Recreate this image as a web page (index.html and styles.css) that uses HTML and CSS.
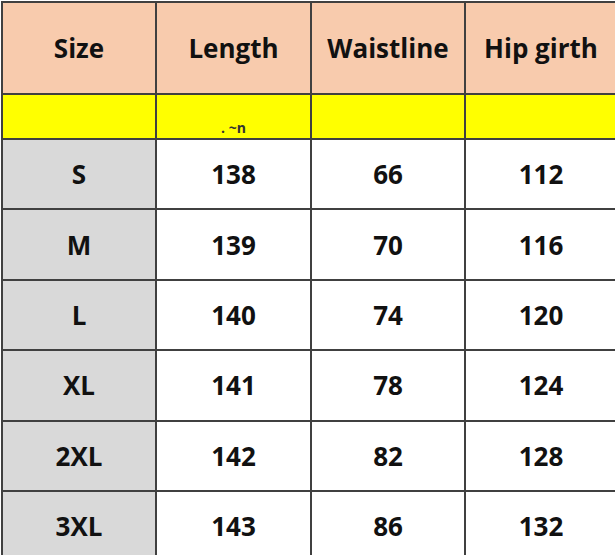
FILE: index.html
```html
<!DOCTYPE html>
<html>
<head>
<meta charset="utf-8">
<link rel="stylesheet" href="styles.css">
</head>
<body>
<table class="size-chart">
  <colgroup>
    <col class="c1"><col class="c2"><col class="c3"><col class="c4">
  </colgroup>
  <tr class="head">
    <td>Size</td><td>Length</td><td>Waistline</td><td>Hip girth</td>
  </tr>
  <tr class="unit">
    <td></td><td><span class="smudge">.&nbsp;~n</span></td><td></td><td></td>
  </tr>
  <tr class="row"><td class="sz">S</td><td>138</td><td>66</td><td>112</td></tr>
  <tr class="row"><td class="sz">M</td><td>139</td><td>70</td><td>116</td></tr>
  <tr class="row"><td class="sz">L</td><td>140</td><td>74</td><td>120</td></tr>
  <tr class="row"><td class="sz">XL</td><td>141</td><td>78</td><td>124</td></tr>
  <tr class="row"><td class="sz">2XL</td><td>142</td><td>82</td><td>128</td></tr>
  <tr class="row"><td class="sz">3XL</td><td>143</td><td>86</td><td>132</td></tr>
</table>
</body>
</html>
```
FILE: styles.css
```css
html, body {
  margin: 0;
  padding: 0;
  overflow: hidden;
  background: #ffffff;
}

.size-chart {
  border-collapse: separate;
  border-spacing: 0;
  table-layout: fixed;
  width: 617px;
  margin: 1px 0 0 1px;
  border-left: 2px solid #404040;
  border-top: 2px solid #404040;
  font-family: "Open Sans", "DejaVu Sans", sans-serif;
  font-weight: 700;
  font-size: 26px;
  color: #111111;
}

.c1 { width: 154px; }
.c2 { width: 155px; }
.c3 { width: 154px; }
.c4 { width: 152px; }

.size-chart td {
  border-right: 2px solid #404040;
  border-bottom: 2px solid #404040;
  padding: 0;
  text-align: center;
  vertical-align: middle;
  background: #ffffff;
  line-height: 1;
}

.head td {
  height: 90px;
  background: #f8cbad;
}

.unit td {
  height: 43px;
  background: #ffff00;
}

.row td {
  height: 68.4px;
}

.row td.sz {
  background: #d9d9d9;
}

.smudge {
  font-size: 14px;
  color: #333333;
  position: relative;
  top: 6px;
  left: 0;
}
```
